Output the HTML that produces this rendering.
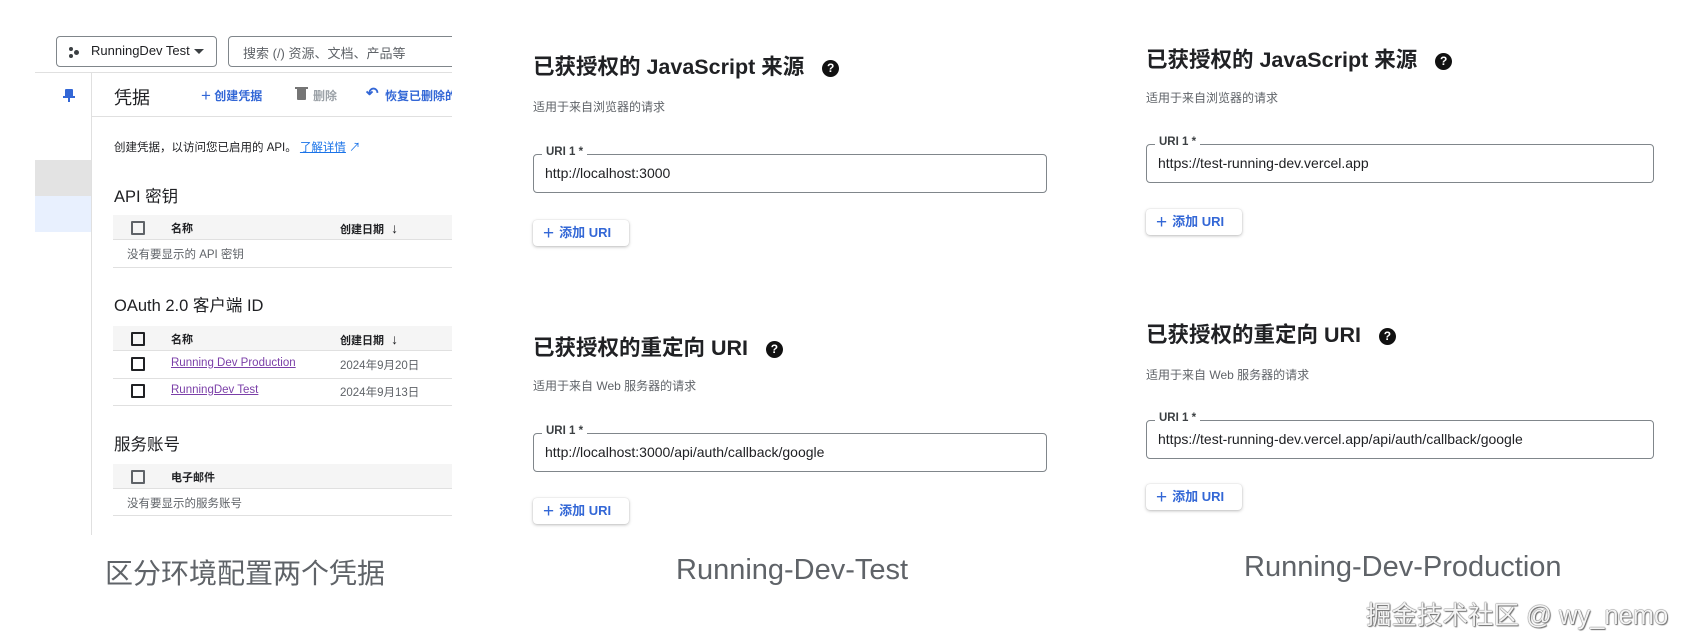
<!DOCTYPE html>
<html><head><meta charset="utf-8"><style>
*{margin:0;padding:0;box-sizing:border-box}
body{width:1688px;height:644px;background:#fff;position:relative;overflow:hidden;font-family:"Liberation Sans","Noto Sans CJK SC",sans-serif;color:#202124}
.a{position:absolute;white-space:nowrap}
.clip{position:absolute;left:0;top:0;width:452px;height:540px;overflow:hidden}
.hl{position:absolute;height:1px;background:#e0e0e0}
.cb{position:absolute;width:14px;height:14px;border:2px solid #202124;border-radius:1px}
.th{position:absolute;left:113px;width:360px;height:25px;background:#f5f5f5;border-bottom:1px solid #e0e0e0}
.h{font-size:21.5px;font-weight:bold;color:#202124}
.sub{font-size:12px;color:#5f6368}
.inp{position:absolute;border:1px solid #80868b;border-radius:4px}
.inp .lb{position:absolute;left:8px;top:-9px;background:#fff;padding:0 4px;font-size:11.5px;font-weight:bold;color:#3c4043}
.inp .v{position:absolute;left:11px;font-size:14px;color:#202124}
.btn{position:absolute;height:26px;width:96px;background:#fff;border-radius:4px;box-shadow:0 1px 3px rgba(0,0,0,.25),0 0 1px rgba(0,0,0,.15);color:#3367d6;font-size:13px;font-weight:bold;line-height:26px;padding-left:10px}
.btn b{font-size:19px;font-weight:normal;vertical-align:-2px;margin-right:5px}
.q{display:inline-block;width:17px;height:17px;border-radius:50%;background:#111;color:#fff;font-size:12px;font-weight:bold;text-align:center;line-height:17px;vertical-align:2px;margin-left:6px}
.cap{font-size:29px;color:#5f6368}
</style></head><body>

<div class="clip">
  <div class="a" style="left:56px;top:36px;width:161px;height:31px;border:1px solid #80868b;border-radius:4px"></div>
  <div class="a" style="left:69px;top:47px;width:4px;height:4px;border-radius:50%;background:#3c4043"></div>
  <div class="a" style="left:69px;top:54px;width:4px;height:4px;border-radius:50%;background:#3c4043"></div>
  <div class="a" style="left:74px;top:50px;width:5px;height:5px;border-radius:50%;background:#3c4043"></div>
  <div class="a" style="left:91px;top:43px;font-size:13px;color:#202124">RunningDev Test</div>
  <div class="a" style="left:194px;top:49px;border-left:5px solid transparent;border-right:5px solid transparent;border-top:5px solid #3c4043"></div>
  <div class="a" style="left:228px;top:36px;width:260px;height:31px;border:1px solid #80868b;border-radius:4px"></div>
  <div class="a" style="left:243px;top:43px;font-size:13px;color:#5f6368">搜索 (/) 资源、文档、产品等</div>
  <div class="hl" style="left:35px;top:72px;width:420px"></div>
  <div class="a" style="left:91px;top:72px;width:1px;height:463px;background:#e0e0e0"></div>
  <div class="a" style="left:65px;top:89px;width:8px;height:8px;background:#3367d6;border-radius:1px"></div>
  <div class="a" style="left:63px;top:96px;width:12px;height:2px;background:#3367d6"></div>
  <div class="a" style="left:68px;top:97px;width:2px;height:5px;background:#3367d6"></div>
  <div class="a" style="left:114px;top:84px;font-size:18px">凭据</div>
  <div class="a" style="left:201px;top:86px;font-size:12px;color:#3367d6;font-weight:bold"><span style="font-size:17px;font-weight:normal;vertical-align:-1px">+</span> 创建凭据</div>
  <div class="a" style="left:297px;top:89px;width:9px;height:11px;background:#757575;border-radius:0 0 1px 1px"></div>
  <div class="a" style="left:295px;top:87px;width:13px;height:2px;background:#757575"></div>
  <div class="a" style="left:313px;top:87px;font-size:12px;color:#9aa0a6;font-weight:bold">删除</div>
  <div class="a" style="left:366px;top:84px;font-size:15px;color:#3367d6;font-weight:bold">↶</div>
  <div class="a" style="left:385px;top:87px;font-size:12px;color:#3367d6;font-weight:bold">恢复已删除的</div>
  <div class="hl" style="left:92px;top:116px;width:363px"></div>
  <div class="a" style="left:114px;top:139px;font-size:11.5px">创建凭据，以访问您已启用的 API。 <span style="color:#1a73e8;text-decoration:underline">了解详情</span><span style="color:#1a73e8"> ↗</span></div>
  <div class="a" style="left:35px;top:160px;width:56px;height:36px;background:#e3e3e3"></div>
  <div class="a" style="left:35px;top:196px;width:56px;height:36px;background:#e8f0fe"></div>
  <div class="a" style="left:114px;top:183px;font-size:16.5px">API 密钥</div>
  <div class="th" style="top:215px"></div>
  <div class="cb" style="left:131px;top:221px;border-color:#5f6368"></div>
  <div class="a" style="left:171px;top:220px;font-size:11px;font-weight:bold">名称</div>
  <div class="a" style="left:340px;top:220px;font-size:11px;font-weight:bold">创建日期 <span style="font-size:14px;margin-left:4px">↓</span></div>
  <div class="a" style="left:127px;top:246px;font-size:11.5px;color:#5f6368">没有要显示的 API 密钥</div>
  <div class="hl" style="left:113px;top:267px;width:360px"></div>
  <div class="a" style="left:114px;top:292px;font-size:16.5px">OAuth 2.0 客户端 ID</div>
  <div class="th" style="top:326px"></div>
  <div class="cb" style="left:131px;top:332px"></div>
  <div class="a" style="left:171px;top:331px;font-size:11px;font-weight:bold">名称</div>
  <div class="a" style="left:340px;top:331px;font-size:11px;font-weight:bold">创建日期 <span style="font-size:14px;margin-left:4px">↓</span></div>
  <div class="cb" style="left:131px;top:357px"></div>
  <div class="a" style="left:171px;top:357px;font-size:11.5px;color:#7b3fa8;text-decoration:underline">Running Dev Production</div>
  <div class="a" style="left:340px;top:357px;font-size:11.5px;color:#5f6368">2024年9月20日</div>
  <div class="hl" style="left:113px;top:378px;width:360px"></div>
  <div class="cb" style="left:131px;top:384px"></div>
  <div class="a" style="left:171px;top:384px;font-size:11.5px;color:#7b3fa8;text-decoration:underline">RunningDev Test</div>
  <div class="a" style="left:340px;top:384px;font-size:11.5px;color:#5f6368">2024年9月13日</div>
  <div class="hl" style="left:113px;top:405px;width:360px"></div>
  <div class="a" style="left:114px;top:431px;font-size:16.5px">服务账号</div>
  <div class="th" style="top:464px"></div>
  <div class="cb" style="left:131px;top:470px;border-color:#5f6368"></div>
  <div class="a" style="left:171px;top:469px;font-size:11px;font-weight:bold">电子邮件</div>
  <div class="a" style="left:127px;top:495px;font-size:11.5px;color:#5f6368">没有要显示的服务账号</div>
  <div class="hl" style="left:113px;top:515px;width:360px"></div>
</div>
<div class="a cap" style="left:105px;top:552px;font-size:28px">区分环境配置两个凭据</div>

<!-- middle -->
<div class="a h" style="left:533px;top:50px">已获授权的 JavaScript 来源 &nbsp;<span class="q">?</span></div>
<div class="a sub" style="left:533px;top:98px">适用于来自浏览器的请求</div>
<div class="inp" style="left:533px;top:154px;width:514px;height:39px"><span class="lb">URI 1 *</span><span class="v" style="top:10px">http://localhost:3000</span></div>
<div class="btn" style="left:533px;top:220px"><b>+</b>添加 URI</div>
<div class="a h" style="left:533px;top:331px">已获授权的重定向 URI &nbsp;<span class="q">?</span></div>
<div class="a sub" style="left:533px;top:377px">适用于来自 Web 服务器的请求</div>
<div class="inp" style="left:533px;top:433px;width:514px;height:39px"><span class="lb">URI 1 *</span><span class="v" style="top:10px">http://localhost:3000/api/auth/callback/google</span></div>
<div class="btn" style="left:533px;top:498px"><b>+</b>添加 URI</div>
<div class="a cap" style="left:676px;top:554px">Running-Dev-Test</div>

<!-- right -->
<div class="a h" style="left:1146px;top:43px">已获授权的 JavaScript 来源 &nbsp;<span class="q">?</span></div>
<div class="a sub" style="left:1146px;top:89px">适用于来自浏览器的请求</div>
<div class="inp" style="left:1146px;top:144px;width:508px;height:39px"><span class="lb">URI 1 *</span><span class="v" style="top:10px">https://test-running-dev.vercel.app</span></div>
<div class="btn" style="left:1146px;top:209px;width:96px"><b>+</b>添加 URI</div>
<div class="a h" style="left:1146px;top:318px">已获授权的重定向 URI &nbsp;<span class="q">?</span></div>
<div class="a sub" style="left:1146px;top:366px">适用于来自 Web 服务器的请求</div>
<div class="inp" style="left:1146px;top:420px;width:508px;height:39px"><span class="lb">URI 1 *</span><span class="v" style="top:10px">https://test-running-dev.vercel.app/api/auth/callback/google</span></div>
<div class="btn" style="left:1146px;top:484px;width:96px"><b>+</b>添加 URI</div>
<div class="a cap" style="left:1244px;top:551px">Running-Dev-Production</div>
<div class="a" style="left:1366px;top:595px;font-size:25.5px;color:#f4f4f4;text-shadow:0 0 1px #555,0 0 1px #555,1px 1px 1px #777">掘金技术社区 @ wy_nemo</div>
</body></html>
